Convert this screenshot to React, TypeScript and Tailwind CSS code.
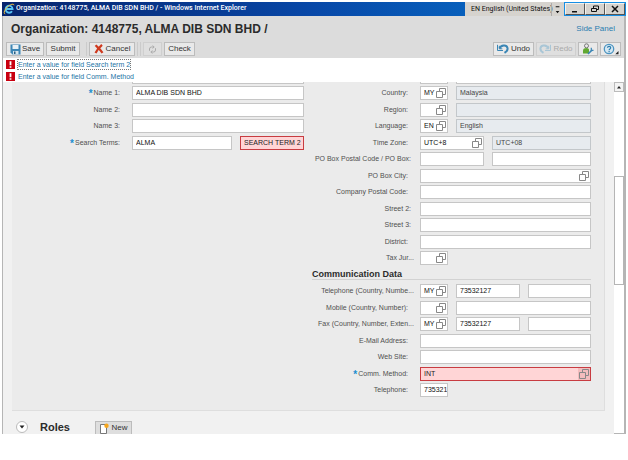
import { useId, type ReactNode } from "react";

type Tone = "plain" | "readonly" | "error";

const tones: Record<Tone, string> = {
  plain: "border-[#c6c6c6] bg-white text-[#111]",
  readonly: "border-[#c3c7ca] bg-[#e7ebef] text-[#444]",
  error: "border-[#c83c41] bg-[#ffd5d6] text-[#222]",
};

function CopyIcon() {
  return (
    <svg viewBox="0 0 10 10" className="size-2.5" fill="none" stroke="#888" strokeWidth="1" aria-hidden="true">
      <path d="M3.500 3.500V.5h6v6h-3" />
      <path d="M.5 3.500h6v6h-6z" />
    </svg>
  );
}

function Field({
  id,
  label,
  value = "",
  tone = "plain",
  help = false,
  className = "flex-1",
}: {
  id?: string;
  label: string;
  value?: string;
  tone?: Tone;
  help?: boolean;
  className?: string;
}) {
  return (
    <div className={`flex h-3.5 min-w-0 items-center border ${tones[tone]} ${className}`}>
      <input
        id={id}
        aria-label={id ? undefined : label}
        defaultValue={value}
        readOnly={tone === "readonly"}
        className="h-3 w-0 min-w-0 flex-1 bg-transparent pl-[3px] text-[7px] leading-3 outline-none"
      />
      {help && (
        <button type="button" aria-label={`Choose ${label}`} className={`flex h-3 w-3 shrink-0 items-center justify-center ${tone === "error" ? "bg-[#f3bcbd]" : ""}`}>
          <CopyIcon />
        </button>
      )}
    </div>
  );
}

function Row({
  label,
  required = false,
  labelClass = "w-[102px] pr-1.5",
  children,
}: {
  label: string;
  required?: boolean;
  labelClass?: string;
  children: (id: string) => ReactNode;
}) {
  const id = useId();
  return (
    <div className="flex h-3.5 odd:mb-0.5 even:mb-[3px]">
      <label htmlFor={id} className={`mr-1.5 flex shrink-0 justify-end whitespace-nowrap text-[7px] leading-3.5 text-[#505050] ${labelClass}`}>
        {required && <span className="mr-px text-[10px] font-bold leading-4 text-[#1c8fd0]">*</span>}
        {label}
      </label>
      <div className="flex min-w-0 flex-1 gap-2">{children(id)}</div>
    </div>
  );
}

const nameLabel = "w-[114px] pr-1.5";
const tight = "w-[102px] pr-[3px]";
const cut = "w-[102px]";

function ToolButton({ children, label, muted = false, className = "" }: { children: ReactNode; label?: string; muted?: boolean; className?: string }) {
  return (
    <button
      type="button"
      aria-label={label}
      disabled={muted}
      className={`flex h-3.5 items-center justify-center whitespace-nowrap border text-[8px] leading-3 ${
        muted ? "border-[#cfcfcf] bg-[#dfdfdf] text-[#aaa]" : "border-[#bcbcbc] bg-[#e9e9e9] text-[#333]"
      } ${className}`}
    >
      {children}
    </button>
  );
}

function Separator() {
  return <span className="h-3.5 w-px bg-[#cbcbcb]" />;
}

function UndoIcon({ color, flip = false }: { color: string; flip?: boolean }) {
  return (
    <svg viewBox="0 0 12 10" className={`h-2.5 w-3 shrink-0 ${flip ? "-scale-x-100" : ""}`} fill="none" stroke={color} aria-hidden="true">
      <path d="M.5.8v5.700h5.500" strokeWidth="1" />
      <path d="M2.500 4.500C4 1 9.600.4 10.500 3.900c.4 2-.9 3.700-3 4.900" strokeWidth="2" />
      <path d="M2.300 1.800v3h3" strokeWidth="1" />
    </svg>
  );
}

function Message({ text, focused = false }: { text: string; focused?: boolean }) {
  return (
    <li className="flex h-3 items-center gap-[3px]">
      <svg viewBox="0 0 9 9" className="size-[9px]" aria-hidden="true">
        <path fill="#c90010" d="M0 0h9v9H0z" />
        <path fill="#fff" d="M3.6 1.3h1.8v4H3.6zM3.6 6.2h1.8v1.6H3.6z" />
      </svg>
      <a href="#field" className={`text-[7px] leading-[9px] text-[#1b74a5] ${focused ? "outline-1 outline-dotted outline-[#777]" : ""}`}>
        {text}
      </a>
    </li>
  );
}

function TitleBar() {
  const control = "flex w-5 items-center justify-center border border-[#f5f3ee] border-r-[#555] border-b-[#555] bg-[#d6d3ce]";
  return (
    <div className="flex h-3.5 items-stretch bg-linear-to-r from-[#07246d] via-[#0848a8] to-[#0b78d0]">
      <svg viewBox="0 0 12 12" className="ml-px mt-px size-3" fill="none" aria-hidden="true">
        <path d="M9 8.2A3.5 3.5 0 1 1 9.6 6H3.4" stroke="#58c4f5" strokeWidth="1.8" />
        <path d="M2.2 10.9C-.4 10.6 2.3 5 6.1 2.6 8.5 1 11 .6 11 2.3" stroke="#f4c33c" strokeWidth="1" />
      </svg>
      <span className="ml-px min-w-0 flex-1 truncate font-[Roboto,sans-serif] text-[7px] font-medium leading-[13px] text-white">
        Organization: 4148775, ALMA DIB SDN BHD / - Windows Internet Explorer
      </span>
      <div className="flex items-center bg-[#d6d3ce] pl-1.5 font-[Roboto,sans-serif] text-[7px] text-[#111]">
        <span className="w-[80px] whitespace-nowrap">EN English (United States)</span>
        <svg viewBox="0 0 13 13" className="size-[13px] border-l border-[#aaa]" aria-hidden="true">
          <path d="M4 3h4v1H4zM4 8h4L6 10.500z" fill="#111" />
        </svg>
      </div>
      <div className="flex border border-[#168ee4]">
        <button type="button" aria-label="Minimize" className={control}>
          <svg viewBox="0 0 8 8" className="size-2"><path d="M1 6h5v1.500H1z" fill="#111" /></svg>
        </button>
        <button type="button" aria-label="Restore" className={control}>
          <svg viewBox="0 0 8 8" className="size-2" fill="none" stroke="#111"><path d="M2.500 3V1h5v3.500H6M.5 3.500h5v3h-5z" /></svg>
        </button>
        <button type="button" aria-label="Close" className={control}>
          <svg viewBox="0 0 8 8" className="size-2" stroke="#111" strokeWidth="1.500"><path d="M1 1l6 6M7 1L1 7" /></svg>
        </button>
      </div>
    </div>
  );
}

function Header() {
  return (
    <header className="bg-[#dcdcdc] pb-0.5 pl-[3px] pr-[3px]">
      <div className="flex h-[26px] items-center justify-between pl-[5px] pr-1.5">
        <h1 className="whitespace-nowrap text-[12px] font-bold leading-4 text-[#2b2b2b]">Organization: 4148775, ALMA DIB SDN BHD /</h1>
        <a href="#side-panel" className="text-[8px] leading-3 text-[#2a7cb0]">Side Panel</a>
      </div>
      <div className="flex items-center gap-0.5">
        <ToolButton className="w-[38px] gap-px">
          <svg viewBox="0 0 11 11" className="size-[11px]" aria-hidden="true">
            <path d="M.5.5h10v10h-8l-2-2z" fill="#3c86b5" />
            <path d="M2.500 1h6v4h-6z" fill="#e8f1f6" />
            <path d="M3 7h5.500v3.500H3z" fill="#d5e5ee" />
            <path d="M4 7.500h1.500v2.500H4z" fill="#285e82" />
          </svg>
          Save
        </ToolButton>
        <ToolButton className="w-[34px]">Submit</ToolButton>
        <span className="ml-0.5"><Separator /></span>
        <Separator />
        <ToolButton className="w-[46px] gap-0.5">
          <svg viewBox="0 0 10 10" className="size-2.5" fill="none" stroke="#cf3a1f" strokeWidth="2.2" aria-hidden="true">
            <path d="M1.500 1.200c2 2 5 4.500 7 7.600M8 .8C5.500 3 3 6 1.500 9" />
          </svg>
          Cancel
        </ToolButton>
        <Separator />
        <Separator />
        <ToolButton label="Refresh" muted className="w-[19px]">
          <svg viewBox="0 0 9 9" className="size-[9px]" fill="none" stroke="#aaa" aria-hidden="true">
            <path d="M1.500 5.800V4a2 2 0 0 1 2-2H6M4.700.500L6.200 2 4.700 3.500M7.500 3.200V5a2 2 0 0 1-2 2H3M4.300 5.500L2.800 7l1.500 1.500" />
          </svg>
        </ToolButton>
        <ToolButton className="w-[31px]">Check</ToolButton>
        <div className="ml-auto flex gap-0.5">
          <ToolButton className="w-[41px] gap-0.5"><UndoIcon color="#3b86b5" />Undo</ToolButton>
          <ToolButton muted className="w-[40px] gap-0.5"><UndoIcon color="#a9c6d6" flip />Redo</ToolButton>
          <ToolButton label="Personalize" className="w-5">
            <svg viewBox="0 0 12 12" className="size-3" fill="none" aria-hidden="true">
              <circle cx="4.500" cy="2.800" r="2" stroke="#777" />
              <path d="M1 10.500V7.500C1 5.800 2.500 5 4.500 5s2.500 1 2.500 2v3.500z" fill="#61a832" />
              <path d="M6 11l4-3.800" stroke="#3b86b5" strokeWidth="1.600" />
              <path d="M9.300 4.800v2.500h2.200" stroke="#3b86b5" strokeWidth="1.200" />
            </svg>
          </ToolButton>
          <ToolButton label="Help" className="w-[21px] gap-px">
            <svg viewBox="0 0 16 12" className="h-3 w-4" aria-hidden="true">
              <circle cx="6" cy="6" r="4.700" fill="#d5e8f3" stroke="#4c94c0" strokeWidth="1.300" />
              <path d="M4.500 4.800c0-2 3.200-1.900 3.200 0C7.700 6 6.100 5.800 6.100 7.200M6.100 8v1.200" stroke="#2f7eaf" strokeWidth="1.200" fill="none" />
              <path d="M15.500 8v3.200h-3.200z" fill="#222" />
            </svg>
          </ToolButton>
        </div>
      </div>
    </header>
  );
}

function NameColumn() {
  return (
    <div className="-mt-3 min-w-0">
      <Row label="" labelClass={nameLabel}>{() => <Field label="Title" />}</Row>
      <Row label="Name 1:" required labelClass={nameLabel}>{(id) => <Field id={id} label="Name 1" value="ALMA DIB SDN BHD" />}</Row>
      <Row label="Name 2:" labelClass={nameLabel}>{(id) => <Field id={id} label="Name 2" />}</Row>
      <Row label="Name 3:" labelClass={nameLabel}>{(id) => <Field id={id} label="Name 3" />}</Row>
      <Row label="Search Terms:" required labelClass={nameLabel}>
        {(id) => (
          <>
            <Field id={id} label="Search term 1" value="ALMA" />
            <Field label="Search term 2" value="SEARCH TERM 2" tone="error" className="w-16" />
          </>
        )}
      </Row>
    </div>
  );
}

function AddressColumn() {
  return (
    <div className="-mt-3 min-w-0">
      <Row label="">{() => (<><Field label="Postal Code" className="w-7" /><Field label="City" /></>)}</Row>
      <Row label="Country:">{(id) => (<><Field id={id} label="Country" value="MY" help className="w-7" /><Field label="Country name" value="Malaysia" tone="readonly" /></>)}</Row>
      <Row label="Region:">{(id) => (<><Field id={id} label="Region" help className="w-7" /><Field label="Region name" tone="readonly" /></>)}</Row>
      <Row label="Language:">{(id) => (<><Field id={id} label="Language" value="EN" help className="w-7" /><Field label="Language name" value="English" tone="readonly" /></>)}</Row>
      <Row label="Time Zone:">{(id) => (<><Field id={id} label="Time Zone" value="UTC+8" help className="w-16" /><Field label="Time Zone name" value="UTC+08" tone="readonly" /></>)}</Row>
      <Row label="PO Box Postal Code / PO Box:" labelClass={tight}>{(id) => (<><Field id={id} label="PO Box Postal Code" className="w-16" /><Field label="PO Box" /></>)}</Row>
      <Row label="PO Box City:">{(id) => <Field id={id} label="PO Box City" help />}</Row>
      <Row label="Company Postal Code:">{(id) => <Field id={id} label="Company Postal Code" />}</Row>
      <Row label="Street 2:" labelClass={tight}>{(id) => <Field id={id} label="Street 2" />}</Row>
      <Row label="Street 3:" labelClass={tight}>{(id) => <Field id={id} label="Street 3" />}</Row>
      <Row label="District:">{(id) => <Field id={id} label="District" />}</Row>
      <Row label="Tax Jur..." labelClass={cut}>{(id) => <Field id={id} label="Tax Jurisdiction" help className="w-7" />}</Row>
      <h2 className="mb-1 h-3 border-b border-[#d2d2d2] text-[9px] font-bold leading-3 text-[#2b2b2b]">Communication Data</h2>
      <Row label="Telephone (Country, Numbe..." labelClass={cut}>{(id) => (<><Field id={id} label="Telephone country" value="MY" help className="w-7" /><Field label="Telephone number" value="73532127" className="w-16" /><Field label="Telephone extension" /></>)}</Row>
      <Row label="Mobile (Country, Number):">{(id) => (<><Field id={id} label="Mobile country" help className="w-7" /><Field label="Mobile number" /></>)}</Row>
      <Row label="Fax (Country, Number, Exten..." labelClass={cut}>{(id) => (<><Field id={id} label="Fax country" value="MY" help className="w-7" /><Field label="Fax number" value="73532127" className="w-16" /><Field label="Fax extension" /></>)}</Row>
      <Row label="E-Mail Address:">{(id) => <Field id={id} label="E-Mail Address" />}</Row>
      <Row label="Web Site:">{(id) => <Field id={id} label="Web Site" />}</Row>
      <Row label="Comm. Method:" required>{(id) => <Field id={id} label="Comm. Method" value="INT" tone="error" help />}</Row>
      <Row label="Telephone:">{(id) => <Field id={id} label="Telephone" value="73532127" className="w-7" />}</Row>
    </div>
  );
}

export default function App() {
  return (
    <div className="bg-white px-0.5 pb-[26px] pt-0.5 font-['Liberation_Sans',Arial,sans-serif]">
      <TitleBar />
      <div className="border-l border-r-2 border-[#b5b5b5]">
        <Header />
        <ul className="bg-white pl-[3px]">
          <Message text="Enter a value for field Search term 2" focused />
          <Message text="Enter a value for field Comm. Method" />
        </ul>
        <main className="flex overflow-hidden bg-[#f1f1f1]">
          <div className="min-w-0 flex-1 px-[9px]">
            <div className="grid grid-cols-[292fr_279fr] gap-x-2 border-b border-r border-[#dedede] bg-[#ebebeb] pb-2.5 pr-[13px]">
              <NameColumn />
              <AddressColumn />
            </div>
            <div className="flex items-end pl-1 pt-2.5">
              <button type="button" aria-label="Collapse Roles" className="mb-px flex size-3 items-center justify-center rounded-full border border-[#bbb] bg-white">
                <svg viewBox="0 0 6 4" className="h-1 w-1.5"><path d="M.5.5h5L3 3.500z" fill="#222" /></svg>
              </button>
              <h2 className="ml-3 w-[55px] text-[11px] font-bold leading-[13px] text-[#2b2b2b]">Roles</h2>
              <button type="button" className="flex h-[13px] w-[37px] items-center justify-center gap-0.5 border border-b-0 border-[#bcbcbc] bg-[#dedede] text-[8px] text-[#333]">
                <svg viewBox="0 0 10 11" className="h-[11px] w-2.5" aria-hidden="true">
                  <path d="M1.500 1.500h6v9h-6z" fill="#fff" stroke="#777" />
                  <circle cx="7.500" cy="2.800" r="2.200" fill="#f5a51c" />
                </svg>
                New
              </button>
            </div>
          </div>
          <div className="flex w-2.5 flex-col bg-white">
            <span className="flex h-2.5 items-center justify-center border border-[#bbb] bg-[#f4f4f4]">
              <svg viewBox="0 0 6 4" className="h-1 w-1.5"><path d="M1 3.500h4L3 1z" fill="#222" /></svg>
            </span>
            <span className="mt-[84px] h-[109px] border border-[#b5b5b5] bg-white" />
            <span className="mt-auto h-px bg-[#b5b5b5]" />
          </div>
        </main>
      </div>
    </div>
  );
}
